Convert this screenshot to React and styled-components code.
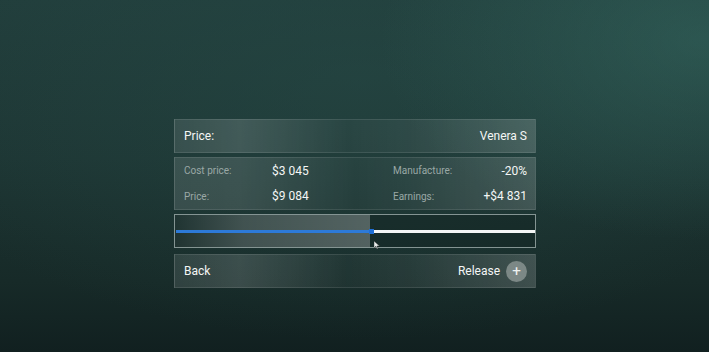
import React from 'react'
import styled, { createGlobalStyle } from 'styled-components'

const GlobalStyle = createGlobalStyle`
  html, body {
    margin: 0;
    padding: 0;
    height: 100%;
  }
  body {
    font-family: Roboto, 'Liberation Sans', sans-serif;
    background: #1b302e;
  }
`

const Screen = styled.div`
  width: 709px;
  height: 352px;
  overflow: hidden;
  display: flex;
  padding: 119px 0 0 174px;
  box-sizing: border-box;
  background:
    radial-gradient(ellipse 320px 200px at 700px 40px, rgba(60, 120, 110, 0.42), transparent 100%),
    radial-gradient(ellipse 500px 260px at 360px 80px, rgba(40, 78, 74, 0.45), transparent 100%),
    linear-gradient(180deg, #213d3b 0%, #1d3533 45%, #172a28 80%, #112020 100%);
`

const Stack = styled.div`
  width: 362px;
  display: flex;
  flex-direction: column;
`

const Panel = styled.div`
  box-sizing: border-box;
  height: ${p => p.h}px;
  margin-bottom: ${p => p.gap || 0}px;
  border: 1px solid rgba(255, 255, 255, 0.1);
  background: linear-gradient(
    90deg,
    rgba(255, 255, 255, 0.1) 0%,
    rgba(255, 255, 255, 0.15) 18%,
    rgba(255, 255, 255, 0.03) 48%,
    rgba(255, 255, 255, 0.06) 65%,
    rgba(255, 255, 255, 0.17) 100%
  );
  display: flex;
  align-items: center;
  justify-content: space-between;
  padding: 0 8px 0 9px;
  color: #f4f6f5;
`

const Title = styled.span`
  font-size: 12px;
  color: #f4f6f5;
`

const Stats = styled.div`
  box-sizing: border-box;
  height: 53px;
  margin-bottom: 4px;
  border: 1px solid rgba(255, 255, 255, 0.1);
  background: linear-gradient(
    90deg,
    rgba(255, 255, 255, 0.12) 0%,
    rgba(255, 255, 255, 0.13) 18%,
    rgba(255, 255, 255, 0.03) 50%,
    rgba(255, 255, 255, 0.06) 65%,
    rgba(255, 255, 255, 0.16) 100%
  );
  display: grid;
  grid-template-columns: 88px 121px 1fr auto;
  grid-template-rows: 1fr 1fr;
  align-items: center;
  padding: 0 8px 0 9px;
`

const Label = styled.span`
  font-size: 10px;
  color: #9aa8a6;
`

const Value = styled.span`
  font-size: 12px;
  color: #f4f6f5;
  text-align: ${p => (p.right ? 'right' : 'left')};
`

const Slider = styled.div`
  position: relative;
  box-sizing: border-box;
  height: 34px;
  margin-bottom: 6px;
  border: 1px solid rgba(190, 205, 203, 0.65);
  background: rgba(20, 38, 37, 0.55);
`

const Fill = styled.div`
  position: absolute;
  left: 0;
  top: 0;
  bottom: 0;
  background: linear-gradient(
    90deg,
    rgba(255, 255, 255, 0.04) 0%,
    rgba(255, 255, 255, 0.18) 35%,
    rgba(255, 255, 255, 0.26) 100%
  );
`

const Track = styled.div`
  position: absolute;
  left: 1px;
  right: 0;
  top: 15px;
  height: 3px;
  background: #f4f6f6;
`

const TrackFill = styled.div`
  height: 100%;
  background: #2d7ad8;
`

const Thumb = styled.div`
  position: absolute;
  top: 14px;
  width: 5px;
  height: 5px;
  background: #1f6fd6;
`

const Cursor = styled.svg`
  position: absolute;
  top: 26px;
`

const ReleaseGroup = styled.div`
  display: flex;
  align-items: center;
  gap: 6px;
`

const RoundButton = styled.button`
  width: 21px;
  height: 21px;
  border-radius: 50%;
  border: none;
  padding: 0;
  background: #7c8886;
  color: #eef1f0;
  font-family: 'DejaVu Sans', sans-serif;
  font-size: 12px;
  font-weight: bold;
  line-height: 21px;
  text-align: center;
`

const stats = [
  ['Cost price:', '$3 045', 'Manufacture:', '-20%'],
  ['Price:', '$9 084', 'Earnings:', '+$4 831'],
]

export default function App() {
  const progress = 0.542
  return (
    <>
      <GlobalStyle />
      <Screen>
        <Stack>
          <Panel h={34} gap={4}>
            <Title>Price:</Title>
            <Title>Venera S</Title>
          </Panel>
          <Stats>
            {stats.map(row => (
              <React.Fragment key={row[0]}>
                <Label>{row[0]}</Label>
                <Value>{row[1]}</Value>
                <Label>{row[2]}</Label>
                <Value right>{row[3]}</Value>
              </React.Fragment>
            ))}
          </Stats>
          <Slider>
            <Fill style={{ width: `${progress * 100}%` }} />
            <Track>
              <TrackFill style={{ width: `${progress * 100}%` }} />
            </Track>
            <Thumb style={{ left: `calc(${progress * 100}% - 1px)` }} />
            <Cursor
              width="6"
              height="8"
              viewBox="0 0 6 8"
              style={{ left: `calc(${progress * 100}% + 4px)` }}
            >
              <path d="M0 0 L0 7 L1.8 5.3 L3 8 L4 7.5 L2.9 5 L5.5 5 Z" fill="#e8eceb" stroke="#222" strokeWidth="0.4" />
            </Cursor>
          </Slider>
          <Panel h={34}>
            <Title>Back</Title>
            <ReleaseGroup>
              <Title>Release</Title>
              <RoundButton>+</RoundButton>
            </ReleaseGroup>
          </Panel>
        </Stack>
      </Screen>
    </>
  )
}
